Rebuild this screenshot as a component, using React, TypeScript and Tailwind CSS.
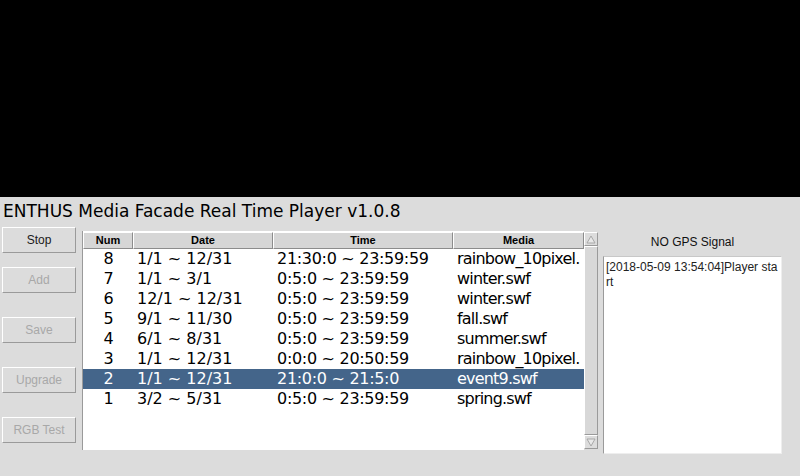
const ROWS = [
  { num: "8", date: "1/1 ~ 12/31", time: "21:30:0 ~ 23:59:59", media: "rainbow_10pixel.swf" },
  { num: "7", date: "1/1 ~ 3/1", time: "0:5:0 ~ 23:59:59", media: "winter.swf" },
  { num: "6", date: "12/1 ~ 12/31", time: "0:5:0 ~ 23:59:59", media: "winter.swf" },
  { num: "5", date: "9/1 ~ 11/30", time: "0:5:0 ~ 23:59:59", media: "fall.swf" },
  { num: "4", date: "6/1 ~ 8/31", time: "0:5:0 ~ 23:59:59", media: "summer.swf" },
  { num: "3", date: "1/1 ~ 12/31", time: "0:0:0 ~ 20:50:59", media: "rainbow_10pixel.swf" },
  { num: "2", date: "1/1 ~ 12/31", time: "21:0:0 ~ 21:5:0", media: "event9.swf" },
  { num: "1", date: "3/2 ~ 5/31", time: "0:5:0 ~ 23:59:59", media: "spring.swf" },
];

const SELECTED = "2";

function Btn({ label, disabled, className }: { label: string; disabled?: boolean; className?: string }) {
  return (
    <div
      className={`w-[74px] h-[26px] flex items-center justify-center border border-t-white border-l-white border-r-[#9a9a9a] border-b-[#9a9a9a] bg-[#dcdcdc] text-[12px] ${
        disabled ? "text-[#a8a8a8]" : "text-[#1a1a1a]"
      } ${className ?? ""}`}
    >
      {label}
    </div>
  );
}

function HeaderCell({ label, w }: { label: string; w: string }) {
  return (
    <div
      className={`${w} h-[17px] flex items-center justify-center border border-t-white border-l-white border-r-[#8c8c8c] border-b-[#8c8c8c] bg-[#d6d6d6] text-[11px] font-bold text-black`}
    >
      {label}
    </div>
  );
}

export default function App() {
  return (
    <div className="w-[800px] h-[476px] bg-[#dcdcdc] overflow-hidden font-['Liberation_Sans',Arial,sans-serif]">
      <div className="h-[197px] bg-black" />

      <div className="h-[30px] pl-[3px] flex items-center text-[17px] text-black font-['DejaVu_Sans',sans-serif]">
        ENTHUS Media Facade Real Time Player v1.0.8
      </div>

      <div className="flex">
        <div className="w-[80px] pl-[2px] flex flex-col">
          <Btn label="Stop" />
          <Btn label="Add" disabled className="mt-[14px]" />
          <Btn label="Save" disabled className="mt-[24px]" />
          <Btn label="Upgrade" disabled className="mt-[24px]" />
          <Btn label="RGB Test" disabled className="mt-[24px]" />
        </div>

        <div className="ml-[2px] mt-[4px] w-[516px] h-[219px] flex bg-white border-l border-[#9a9a9a]">
          <div className="w-[501px] flex flex-col pt-[1px]">
            <div className="flex">
              <HeaderCell label="Num" w="w-[50px]" />
              <HeaderCell label="Date" w="w-[140px]" />
              <HeaderCell label="Time" w="w-[180px]" />
              <HeaderCell label="Media" w="w-[131px]" />
            </div>
            <div className="flex flex-col font-['DejaVu_Sans',sans-serif] text-[16px]">
              {ROWS.map((r) => (
                <div
                  key={r.num}
                  className={`flex h-[20px] items-center whitespace-nowrap overflow-hidden ${
                    r.num === SELECTED ? "bg-[#44658a] text-white" : "text-black"
                  }`}
                >
                  <div className="w-[50px] text-center pl-[1px]">{r.num}</div>
                  <div className="w-[140px] pl-[4px]">{r.date}</div>
                  <div className="w-[180px] pl-[4px] tracking-[-0.3px]">{r.time}</div>
                  <div className="w-[127px] pl-[4px] overflow-hidden tracking-[-0.8px]">{r.media}</div>
                </div>
              ))}
            </div>
          </div>

          <div className="w-[15px] flex flex-col bg-[#dcdcdc] pt-[1px] pb-[1px]">
            <div className="h-[14px] flex items-center justify-center border border-t-white border-l-white border-r-[#9a9a9a] border-b-[#9a9a9a]">
              <svg width="10" height="9" viewBox="0 0 10 9">
                <path d="M5 1 L9 8 L1 8 Z" fill="#e8e8e8" stroke="#a8a8a8" strokeWidth="1" />
              </svg>
            </div>
            <div className="flex-1 border border-t-white border-l-white border-r-[#9a9a9a] border-b-[#9a9a9a] bg-[#d8d8d8]" />
            <div className="h-[14px] flex items-center justify-center border border-t-white border-l-white border-r-[#9a9a9a] border-b-[#9a9a9a]">
              <svg width="10" height="9" viewBox="0 0 10 9">
                <path d="M1 1 L9 1 L5 8 Z" fill="#e8e8e8" stroke="#a8a8a8" strokeWidth="1" />
              </svg>
            </div>
          </div>
        </div>

        <div className="ml-[5px] w-[179px] flex flex-col">
          <div className="h-[29px] flex items-center justify-center text-[12px] text-[#111]">NO GPS Signal</div>
          <div className="h-[198px] bg-white border-l border-t border-l-[#9a9a9a] border-t-[#c8c8c8] border-r border-b border-r-[#eeeeee] border-b-[#eeeeee] px-[2px] pt-[3px] text-[12px] leading-[15px] text-[#222] break-all">
            [2018-05-09 13:54:04]Player start
          </div>
        </div>
      </div>
    </div>
  );
}
